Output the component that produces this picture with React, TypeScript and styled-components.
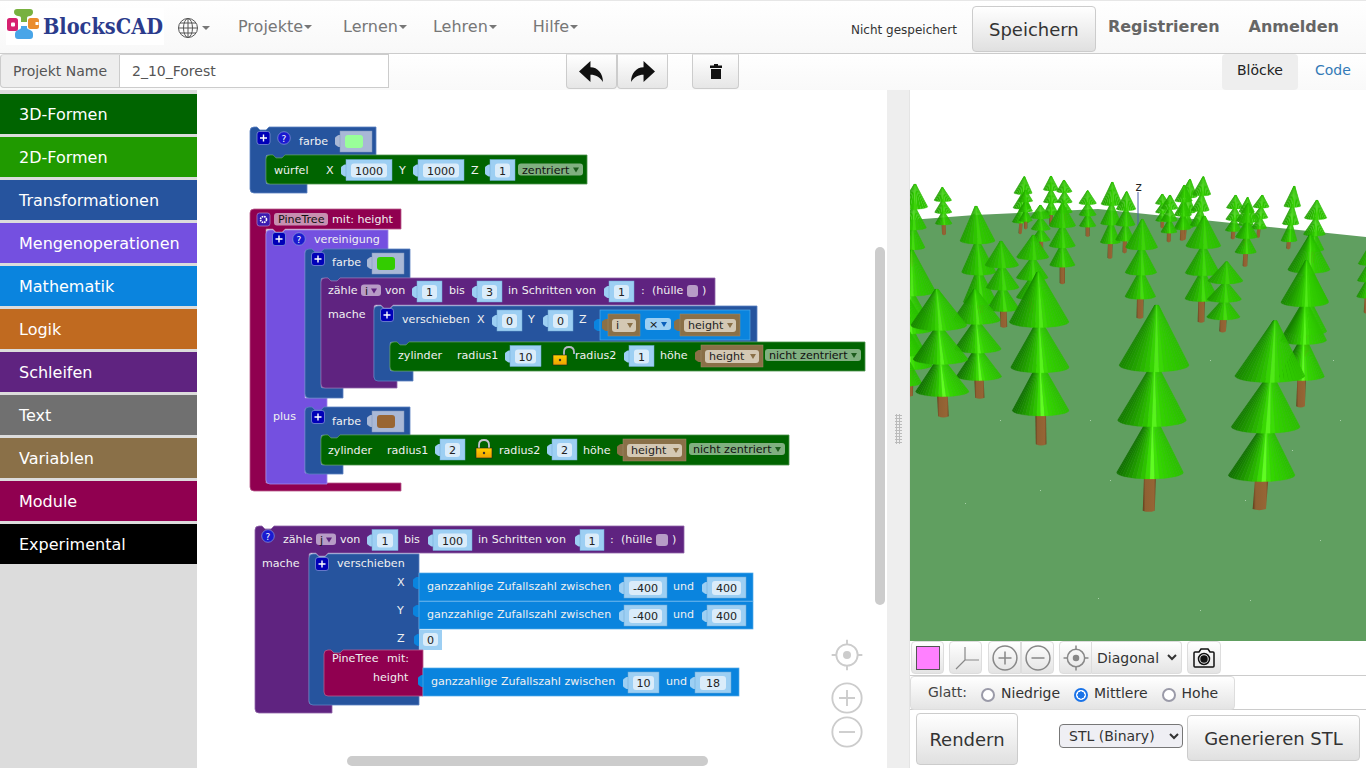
import React from "react";
import styled, { createGlobalStyle } from "styled-components";

const Global = createGlobalStyle`
  html, body { margin: 0; padding: 0; overflow: hidden; background: #fff; font-family: "DejaVu Sans", sans-serif; }
  #root { width: 1366px; height: 768px; }
`;
const Page = styled.div`width:1366px;height:768px;display:flex;flex-direction:column;overflow:hidden;`;
const Nav = styled.header`flex:none;display:flex;align-items:flex-start;background:linear-gradient(#fff,#f8f8f8);border-top:1px solid #e7e7e7;border-bottom:1px solid #ccc;height:52px;`;
const LogoBox = styled.div`width:158px;height:37px;margin:7px 0 0 6px;background:#fff;flex:none;`;
const GlobeWrap = styled.div`margin:16px 0 0 13px;width:46px;height:22px;display:flex;align-items:center;gap:3px;flex:none;`;
const Caret = styled.span`display:inline-block;width:0;height:0;border-left:4px solid transparent;border-right:4px solid transparent;border-top:4px solid ${p=>p.$c||"#777"};`;
const Menu = styled.nav`display:flex;margin-left:15px;`;
const MenuItem = styled.a`font-size:16px;color:#777;display:flex;align-items:center;gap:1px;height:51px;padding-right:${p=>p.$pr}px;`;
const NavRight = styled.div`margin-left:auto;display:flex;align-items:flex-start;`;
const Status = styled.span`font-size:12px;color:#333;margin:22px 15px 0 0;white-space:nowrap;`;
const SaveBtn = styled.button`width:124px;height:46px;margin-top:5px;font:18px "DejaVu Sans",sans-serif;color:#333;background:linear-gradient(#fff,#e0e0e0);border:1px solid #ccc;border-radius:4px;`;
const NavLink = styled.a`font-size:16px;font-weight:bold;color:#666;margin-top:16px;margin-left:${p=>p.$ml}px;margin-right:${p=>p.$mr||0}px;white-space:nowrap;`;

const Tools = styled.div`height:36px;flex:none;display:flex;background:linear-gradient(#fff,#f9f9f9);`;
const NameGroup = styled.div`width:389px;height:34px;display:flex;flex:none;`;
const NameAddon = styled.div`width:120px;box-sizing:border-box;background:#eee;border:1px solid #ccc;border-radius:4px 0 0 4px;border-top-color:#ddd;font-size:14px;color:#555;padding-left:12px;line-height:32px;`;
const NameInput = styled.div`flex:1;box-sizing:border-box;background:#fff;border:1px solid #ccc;border-left:none;font-size:14px;color:#555;padding-left:12px;line-height:32px;`;
const Actions = styled.div`margin-left:177px;display:flex;`;
const ActBtn = styled.button`width:${p=>p.$w||51}px;height:35px;margin-left:${p=>p.$ml||0}px;padding:0;display:flex;align-items:center;justify-content:center;background:linear-gradient(#fff,#e6e6e6);border:1px solid #ccc;border-top-color:#e8e8e8;border-radius:0 0 4px 4px;`;
const Tabs = styled.div`margin-left:auto;display:flex;`;
const TabOn = styled.div`width:76px;height:36px;background:#eee;border-radius:4px;font-size:14px;color:#222;text-align:center;line-height:33px;`;
const TabOff = styled.div`width:68px;height:36px;font-size:14px;color:#337ab7;padding-left:17px;box-sizing:border-box;line-height:33px;`;

const Main = styled.main`flex:1;min-height:0;display:flex;`;
const Sidebar = styled.aside`width:197px;flex:none;background:#dcdcdc;padding-top:4px;box-sizing:border-box;display:flex;flex-direction:column;gap:3px;`;
const Cat = styled.div`height:40px;flex:none;padding-left:19px;line-height:41px;font-size:16px;color:#fff;background:${p=>p.$bg};`;
const Workspace = styled.section`width:690px;flex:none;position:relative;background:#fff;overflow:hidden;`;
const Canvas = styled.svg`display:block;`;
const ScrollV = styled.div`position:absolute;left:678px;top:157px;width:10px;height:358px;background:#ccc;border-radius:5px;`;
const ScrollH = styled.div`position:absolute;left:150px;top:666px;width:361px;height:10px;background:#ccc;border-radius:5px;`;
const WsControls = styled.div`position:absolute;left:633px;top:549px;width:34px;display:flex;flex-direction:column;align-items:center;`;
const CtlSpacer = styled.div`height:${p=>p.$h}px;flex:none;`;
const Gutter = styled.div`width:23px;flex:none;background:#eee;display:flex;align-items:center;justify-content:center;`;
const Grip = styled.div`width:7px;height:30px;margin-top:-1px;background-image:radial-gradient(#bbb 1px,transparent 1.2px);background-size:3px 3px;`;
const Right = styled.section`flex:1;display:flex;flex-direction:column;min-width:0;border-left:1px solid #e4e4e4;box-sizing:border-box;margin-left:-1px;`;
const RowOne = styled.div`height:34px;flex:none;display:flex;gap:5px;padding-left:1px;border-bottom:1px solid #ccc;`;
const Group = styled.div`display:flex;margin-left:${p=>p.$ml||0}px;`;
const ViewBtn = styled.button`width:${p=>p.$w||33}px;height:33px;padding:0;display:flex;align-items:center;justify-content:center;background:linear-gradient(#fff,#e4e4e4);border:1px solid #ddd;border-radius:${p=>p.$r||"4px"};`;
const Swatch = styled.span`display:block;width:24px;height:24px;box-sizing:border-box;background:#ff80ff;border:1px solid #555;`;
const SelectShell = styled.div`width:90px;height:33px;box-sizing:border-box;background:linear-gradient(#fff,#e4e4e4);border:1px solid #ddd;border-left:none;border-radius:0 4px 4px 0;`;
const ViewSelect = styled.select`width:88px;height:31px;font:14px "DejaVu Sans",sans-serif;color:#333;background:transparent;border:none;padding:0 0 0 1px;outline:none;`;
const RowTwo = styled.div`height:33px;flex:none;border-bottom:1px solid #ccc;`;
const Glatt = styled.div`width:325px;height:34px;box-sizing:border-box;background:linear-gradient(#fff,#e4e4e4);border:1px solid #ddd;border-radius:4px;display:flex;align-items:center;font-size:14px;color:#444;padding-left:17px;`;
const GlattLabel = styled.span`margin-right:14px;margin-top:-3px;`;
const RadioLabel = styled.label`display:flex;align-items:center;margin-right:${p=>p.$mr}px;color:#333;`;
const Radio = styled.input`appearance:none;box-sizing:border-box;margin:3px 6px 0 0;width:14px;height:14px;border-radius:50%;border:2px solid #9a9aa8;background:#fff;
  &:checked{border-color:#1a73e8;background:radial-gradient(#1a73e8 3.4px,#fff 3.8px);}`;
const RowThree = styled.div`flex:1;display:flex;align-items:center;padding-left:6px;`;
const RenderBtn = styled.button`width:102px;height:52px;font:18px "DejaVu Sans",sans-serif;color:#333;background:linear-gradient(#fff,#e0e0e0);border:1px solid #ccc;border-radius:4px;`;
const FormatSelect = styled.select`width:124px;height:24px;margin:-6px 0 0 41px;font:14px "DejaVu Sans",sans-serif;color:#333;background:#efeff4;border:1px solid #777;border-radius:4px;padding-left:5px;`;
const GenBtn = styled.button`width:173px;height:46px;margin:-2px 0 0 4px;font:18px "DejaVu Sans",sans-serif;color:#333;background:linear-gradient(#fff,#e0e0e0);border:1px solid #ccc;border-radius:4px;`;

const BL = styled.text`font:11.1px "DejaVu Sans",sans-serif;fill:${p=>p.$c||"#f0f0f0"};`;
const FT = styled.text`font:11.1px "DejaVu Sans",sans-serif;fill:#222;text-anchor:${p=>p.$a||"middle"};`;

const C = { blue:"#26549e", green:"#006400", purple:"#5f2380", violet:"#7450e0", mod:"#900050", math:"#0a84de", brown:"#8a7048" };
const EDGE:Record<string,string> = { "#26549e":"#5c82c0","#006400":"#4c924c","#5f2380":"#8f66a8","#7450e0":"#9e88ea","#900050":"#b75a8c" };

/* Row on top, column on the left, a mouth for the nested blocks, foot below */
function pathC(x:number,y:number,x2:number,y1:number,xi:number,y2:number,xb:number,y3:number){
  return `M${x+4} ${y} H${x+7} l3 3 h6 l3 -3 H${x2} V${y1} H${xi+19} l-3 3 h-6 l-3 -3 H${xi+2} q-2 0 -2 2 V${y2-2} q0 2 2 2 H${xb} V${y3} H${x+4} q-4 0 -4 -4 V${y+4} q0 -4 4 -4 Z`;
}
function pathR(x:number,y:number,x2:number,y2:number){
  return `M${x+4} ${y} H${x+7} l3 3 h6 l3 -3 H${x2} V${y2} H${x+4} q-4 0 -4 -4 V${y+4} q0 -4 4 -4 Z`;
}
const Shape=({d,c}:{d:string;c:string})=><path d={d} fill={c} stroke={EDGE[c]} strokeWidth={0.8}/>;
const Tab=({x,y,c}:{x:number;y:number;c:string})=><path d={`M${x+6} ${y-6} h-2 q-1 0 -2 1 q-2 1 -2 2 v6 q0 1 2 2 q1 1 2 1 h2 Z`} fill={c}/>;
const Num=({x,y,w,t}:{x:number;y:number;w:number;t:string})=>(
  <g>
    <Tab x={x-5} y={y+11} c="#9dcff3"/>
    <rect x={x} y={y} width={w} height={21} fill="#9dcff3" stroke="#6fa8d4" strokeWidth={0.5}/>
    <rect x={x+5} y={y+4} width={w-10} height={14} rx={3} fill="#daecfa"/>
    <FT x={x+w/2} y={y+15}>{t}</FT>
  </g>
);
const Dd=({x,y,w,t,c="#80b080"}:{x:number;y:number;w:number;t:string;c?:string})=>(
  <g>
    <rect x={x} y={y} width={w} height={12} rx={3} fill={c}/>
    <BL x={x+4} y={y+10} $c="#111">{t}</BL>
    <path d={`M${x+w-10} ${y+4} h6 l-3 5 Z`} fill={"#1d5c1d"}/>
  </g>
);
const Var=({x,y,w,t}:{x:number;y:number;w:number;t:string})=>(
  <g>
    <Tab x={x-6} y={y+11} c={C.brown}/>
    <rect x={x} y={y} width={w} height={22} fill={C.brown} stroke="#a08a68" strokeWidth={0.5}/>
    <rect x={x+4} y={y+5} width={w-8} height={13} rx={3} fill="#d4c8b4"/>
    <BL x={x+8} y={y+15} $c="#222">{t}</BL>
    <path d={`M${x+w-13} ${y+9} h6 l-3 5 Z`} fill={C.brown}/>
  </g>
);
const Plus=({x,y}:{x:number;y:number})=>(
  <g>
    <rect x={x-6.5} y={y-6.5} width={13} height={13} rx={2.5} fill="#0000b8" stroke="#8b9ad8" strokeWidth={0.7}/>
    <path d={`M${x-3.5} ${y} h7 M${x} ${y-3.5} v7`} stroke="#fff" strokeWidth={1.4}/>
  </g>
);
const Q=({x,y}:{x:number;y:number})=>(
  <g>
    <circle cx={x} cy={y} r={6.3} fill="#1a1ad0" stroke="#8b9ad8" strokeWidth={0.7}/>
    <BL x={x} y={y+3.5} textAnchor="middle" style={{fontSize:9}} $c="#fff">?</BL>
  </g>
);
const ColorF=({x,y,c}:{x:number;y:number;c:string})=>(
  <g>
    <Tab x={x-5} y={y+10} c="#a9b8d6"/>
    <rect x={x} y={y} width={32} height={21} fill="#a9b8d6" stroke="#7f94bd" strokeWidth={0.5}/>
    <rect x={x+5} y={y+4} width={18} height={13} rx={3} fill={c}/>
  </g>
);
const IdxDd=({x,y,t}:{x:number;y:number;t:string})=>(
  <g>
    <rect x={x} y={y} width={20} height={11.5} rx={3} fill="#b79cc6"/>
    <BL x={x+4} y={y+10} $c="#111">{t}</BL>
    <path d={`M${x+10} ${y+4} h6 l-3 5 Z`} fill={C.purple}/>
  </g>
);
const Lock=({x,y,open}:{x:number;y:number;open?:boolean})=>(
  <g>
    {open
      ? <path d={`M${x+11} ${y+7} v-3 q0 -5 5 -5 q5 0 5 5 v2`} fill="none" stroke="#b8b8c8" strokeWidth={1.8}/>
      : <path d={`M${x+3} ${y+7} v-3 q0 -5 5 -5 q5 0 5 5 v3`} fill="none" stroke="#c4c4d0" strokeWidth={1.8}/>}
    <rect x={x} y={y+7} width={open?14:16} height={10} fill="url(#gold)" stroke="#222" strokeWidth={0.6}/>
    <circle cx={x+(open?7:8)} cy={y+12} r={1.2} fill="#333"/>
  </g>
);

const Blocks=()=> (
  <Canvas width={690} height={678} viewBox="197 90 690 678">
    <defs>
      <linearGradient id="gold" x1="0" y1="0" x2="0" y2="1"><stop offset="0" stopColor="#ffd200"/><stop offset="1" stopColor="#f0a000"/></linearGradient>
    </defs>
    {/* farbe / würfel */}
    <Shape d={pathC(250,127,376,155,266,184,307,193)} c={C.blue}/>
    <Plus x={263.5} y={138}/><Q x={284} y={138}/>
    <BL x={299} y={145}>farbe</BL>
    <ColorF x={340} y={131} c="#99ff99"/>
    <Shape d={pathR(266,155,587,184)} c={C.green}/>
    <BL x={274} y={174}>würfel</BL><BL x={326} y={174}>X</BL>
    <Num x={346} y={159.5} w={46} t="1000"/>
    <BL x={399} y={174}>Y</BL><Num x={418} y={159.5} w={46} t="1000"/>
    <BL x={471} y={174}>Z</BL><Num x={490} y={159.5} w={25} t="1"/>
    <Dd x={518} y={163.5} w={65} t="zentriert"/>

    {/* PineTree definition */}
    <Shape d={`M254 209 H401 V229 H285 l-3 3 h-6 l-3 -3 H266 V483 H401 V491 H254 q-4 0 -4 -4 V213 q0 -4 4 -4 Z`} c={C.mod}/>
    <rect x={257} y={213} width={13} height={13} rx={2.5} fill="#3a1ab0" stroke="#b08ac8" strokeWidth={0.7}/>
    <circle cx={263.5} cy={219.5} r={3} fill="none" stroke="#fff" strokeWidth={1.6} strokeDasharray="1.6 0.8"/>
    <rect x={274} y={213} width={54} height={12.5} rx={3} fill="#c78fb0"/>
    <BL x={278} y={223} $c="#111">PineTree</BL>
    <BL x={332} y={223}>mit: height</BL>

    <Shape d={`M270 230 H273 l3 3 h6 l3 -3 H388 V250 H324 l-3 3 h-6 l-3 -3 H307 q-2 0 -2 2 V398 H327 V408 H324 l-3 3 h-6 l-3 -3 H307 q-2 0 -2 2 V473 H327 V484 H270 q-4 0 -4 -4 V234 q0 -4 4 -4 Z`} c={C.violet}/>
    <Plus x={279} y={239}/><Q x={299} y={239}/>
    <BL x={314} y={243}>vereinigung</BL>
    <BL x={273} y={420}>plus</BL>

    <Shape d={pathC(305,249,410,278,321,388,343,398)} c={C.blue}/>
    <Plus x={318} y={259}/>
    <BL x={332} y={266}>farbe</BL>
    <ColorF x={372} y={253} c="#33cc00"/>

    <Shape d={pathC(321,278,715,305,374,379,397,388)} c={C.purple}/>
    <BL x={328} y={294}>zähle</BL><IdxDd x={361} y={284.5} t="i"/>
    <BL x={385} y={294}>von</BL><Num x={417} y={281} w={25} t="1"/>
    <BL x={449} y={294}>bis</BL><Num x={477} y={281} w={25} t="3"/>
    <BL x={508} y={294}>in Schritten von</BL><Num x={609} y={281} w={25} t="1"/>
    <BL x={641} y={294}>:</BL><BL x={652} y={294}>(hülle</BL>
    <rect x={687} y={285} width={11} height={12} rx={3} fill="#b79cc6"/>
    <BL x={702} y={294}>)</BL>
    <BL x={328} y={318}>mache</BL>

    <Shape d={pathC(374,306,757,342,390,371,413,381)} c={C.blue}/>
    <Plus x={387} y={315}/>
    <BL x={402} y={323}>verschieben</BL>
    <BL x={477} y={323}>X</BL><Num x={497} y={310} w={25} t="0"/>
    <BL x={528} y={323}>Y</BL><Num x={548} y={310} w={25} t="0"/>
    <BL x={579} y={323}>Z</BL>
    <Tab x={594} y={325} c={C.math}/>
    <rect x={600} y={310} width={150} height={30} fill={C.math} stroke="#53a9e8" strokeWidth={0.7}/>
    <Var x={608} y={314} w={32} t="i"/>
    <rect x={645} y={318} width={26} height={12} rx={3} fill="#9dcff3"/>
    <BL x={649} y={328} $c="#111">×</BL><path d="M661 322 h6 l-3 5 Z" fill="#0a5fbb"/>
    <Var x={680} y={314} w={60} t="height"/>

    <Shape d={pathR(390,342,865,371)} c={C.green}/>
    <BL x={398} y={359}>zylinder</BL><BL x={457} y={359}>radius1</BL>
    <Num x={510} y={345.5} w={31} t="10"/>
    <Lock x={553} y={348} open/>
    <BL x={575} y={359}>radius2</BL><Num x={629} y={345.5} w={25} t="1"/>
    <BL x={660} y={359}>höhe</BL><Var x={701} y={345} w={62} t="height"/>
    <Dd x={765} y={349} w={96} t="nicht zentriert"/>

    <Shape d={pathC(305,407,410,435,321,465,343,474)} c={C.blue}/>
    <Plus x={318} y={417}/>
    <BL x={332} y={425}>farbe</BL>
    <ColorF x={372} y={411} c="#996633"/>
    <Shape d={pathR(321,435,789,465)} c={C.green}/>
    <BL x={328} y={454}>zylinder</BL><BL x={387} y={454}>radius1</BL>
    <Num x={440} y={439} w={25} t="2"/>
    <Lock x={476} y={441}/>
    <BL x={499} y={454}>radius2</BL><Num x={552} y={439} w={25} t="2"/>
    <BL x={583} y={454}>höhe</BL><Var x={623} y={439} w={63} t="height"/>
    <Dd x={689} y={443} w={96} t="nicht zentriert"/>

    {/* zähle j */}
    <Shape d={pathC(255,526,684,553,309,704,332,713)} c={C.purple}/>
    <Q x={268} y={536}/>
    <BL x={283} y={543}>zähle</BL><IdxDd x={316} y={533.5} t="j"/>
    <BL x={340} y={543}>von</BL><Num x={372} y={529.5} w={26} t="1"/>
    <BL x={404} y={543}>bis</BL><Num x={433} y={529.5} w={39} t="100"/>
    <BL x={478} y={543}>in Schritten von</BL><Num x={580} y={529.5} w={24} t="1"/>
    <BL x={610} y={543}>:</BL><BL x={621} y={543}>(hülle</BL>
    <rect x={656} y={534} width={12} height={12} rx={3} fill="#b79cc6"/>
    <BL x={672} y={543}>)</BL>
    <BL x={262} y={567}>mache</BL>

    <Shape d={pathR(309,554,419,705)} c={C.blue}/>
    <Plus x={322} y={564}/>
    <BL x={337} y={567}>verschieben</BL>
    <BL x={397} y={586}>X</BL><Tab x={413} y={583} c={C.math}/>
    <rect x={419} y={573} width={334} height={28} fill={C.math} stroke="#53a9e8" strokeWidth={0.7}/>
    <BL x={427} y={590}>ganzzahlige Zufallszahl zwischen</BL>
    <Num x={624} y={577} w={43} t="-400"/>
    <BL x={673} y={590}>und</BL><Num x={707} y={577} w={39} t="400"/>
    <BL x={397} y={614}>Y</BL><Tab x={413} y={611} c={C.math}/>
    <rect x={419} y={601.5} width={334} height={27.5} fill={C.math} stroke="#53a9e8" strokeWidth={0.7}/>
    <BL x={427} y={618}>ganzzahlige Zufallszahl zwischen</BL>
    <Num x={624} y={605} w={43} t="-400"/>
    <BL x={673} y={618}>und</BL><Num x={707} y={605} w={39} t="400"/>
    <BL x={397} y={642}>Z</BL><Tab x={414} y={640} c={C.math}/>
    <rect x={419} y={630} width={23} height={20} fill="#9dcff3"/>
    <rect x={423} y={633} width={15} height={13} rx={3} fill="#daecfa"/>
    <FT x={430.5} y={643.5}>0</FT>

    <Shape d={pathR(324,650,423,696)} c={C.mod}/>
    <BL x={332} y={662}>PineTree</BL><BL x={387} y={662}>mit:</BL>
    <BL x={373} y={681}>height</BL>
    <Tab x={418} y={681} c={C.math}/>
    <rect x={423} y={668} width={316} height={28} fill={C.math} stroke="#53a9e8" strokeWidth={0.7}/>
    <BL x={431} y={685}>ganzzahlige Zufallszahl zwischen</BL>
    <Num x={628} y={672} w={31} t="10"/>
    <BL x={666} y={685}>und</BL><Num x={695} y={672} w={36} t="18"/>
  </Canvas>
);

/* [apexX, apexY, baseX, baseY, halfWidth, trunkBottomY, trunkHalf] in 3x coordinates */
type T=[number,number,number,number,number,number,number];
const TREES:T[]=[
  [30,42,20,240,40,290,7],[112,52,116,165,25,195,6],[358,20,348,160,26,192,5],[362,60,362,155,20,178,5],
  [438,18,438,135,22,165,5],[477,30,480,130,22,160,5],[406,105,408,215,28,240,6],[548,62,548,172,25,200,6],
  [622,36,616,222,30,266,7],[665,65,660,214,28,250,6],[772,72,772,155,20,175,5],[855,28,840,175,26,210,6],
  [838,45,832,180,25,212,6],[895,20,882,170,26,180,5],[795,75,792,190,24,217,6],[992,75,985,185,24,208,6],
  [1072,75,1062,178,23,203,5],[1028,82,1020,205,22,230,5],[1168,48,1152,216,24,238,6],[1236,90,1225,245,32,280,6],
  [1395,225,1385,385,30,430,6],
  [213,108,225,405,50,430,10],[288,213,295,425,48,473,10],[385,195,380,390,46,430,9],[472,100,472,292,38,342,8],
  [712,148,706,388,46,446,10],[898,138,890,395,50,458,10],[1030,100,1022,252,32,290,7],[965,275,955,450,50,487,10],
  [1216,195,1205,495,60,560,8],[1205,272,1190,632,68,712,13],
  [20,240,10,600,72,680,16],[-10,350,-10,650,60,700,12],
  [210,358,222,632,68,686,14],[95,358,112,680,80,742,16],[400,307,407,738,85,826,16],
  [755,405,735,927,100,1025,18],[1110,452,1070,935,100,1020,20],
];
const mix=(a:number[],b:number[],f:number)=>a.map((v,i)=>Math.round(v+(b[i]-v)*f));
const RAMP:[number,number[]][]=[[0,[16,110,0]],[0.2,[30,150,0]],[0.38,[44,190,0]],[0.46,[52,215,0]],[0.5,[104,255,40]],[0.56,[90,250,30]],[0.62,[54,218,0]],[0.8,[48,205,0]],[1,[44,192,0]]];
function leaf(t:number,glow:number){
  let i=0; while(i<RAMP.length-2&&t>RAMP[i+1][0]) i++;
  const [t0,c0]=RAMP[i],[t1,c1]=RAMP[i+1];
  const c=mix(c0,c1,(t-t0)/(t1-t0));
  const base=mix([44,190,0],c,glow);
  return `rgb(${base[0]},${base[1]},${base[2]})`;
}
const Cone=({ax,ay,cx,cy,w,glow,n}:{ax:number;ay:number;cx:number;cy:number;w:number;glow:number;n:number})=>{
  const ry=w*0.2, top=w*0.05, parts=[];
  for(let i=0;i<n;i++){
    const p0=Math.PI*i/n,p1=Math.PI*(i+1)/n;
    const d=`M${ax-top*Math.cos(p0)} ${ay} L${cx-w*Math.cos(p0)} ${cy+ry*Math.sin(p0)} L${cx-w*Math.cos(p1)} ${cy+ry*Math.sin(p1)} L${ax-top*Math.cos(p1)} ${ay} Z`;
    const col=leaf(0.5-0.5*Math.cos((p0+p1)/2),glow);
    parts.push(<path key={i} d={d} fill={col} stroke={col} strokeWidth={0.7}/>);
  }
  return <g>{parts}</g>;
};
const Tree=({t}:{t:T})=>{
  const [ax,ay,bx,by,hw,ty,th]=t;
  const at=(f:number)=>[ax+(bx-ax)*f, ay+(by-ay)*f];
  const tx=bx+(bx-ax)*(ty-by)/(by-ay);
  const big=hw>55;
  const cones:[number,number,number,number][]=[[0.625,1,1,1],[0.33,0.7,1.03,.85],[0,0.385,1.05,.7]];
  return (
    <g>
      <path d={`M${bx-th} ${by-8} L${tx-th} ${ty-3} Q${tx} ${ty+4} ${tx+th} ${ty-3} L${bx+th} ${by-8} Z`} fill="url(#bark)"/>
      {cones.map(([f0,f1,k,g],i)=>{
        const [x0,y0]=at(f0),[x1,y1]=at(f1),w=hw*k;
        return <Cone key={i} ax={x0} ay={y0} cx={x1} cy={y1-w*0.2} w={w} glow={big?g:g*0.55} n={big?22:12}/>;
      })}
    </g>
  );
};
const SPECKS=[[1013,410],[1090,420],[1210,360],[1292,450],[1245,500],[1333,360],[1098,598],[1200,610],[965,503],[1040,490],[1110,480],[1340,420],[1320,540],[1250,600],[1000,420],[1304,260]];
const Viewer=()=>(
  <Canvas width={456} height={551} viewBox="910 90 456 551">
    <defs>
      <linearGradient id="bark" x1="0" x2="1" y1="0" y2="0">
        <stop offset="0" stopColor="#5f3e1c"/><stop offset=".2" stopColor="#8f6032"/><stop offset=".85" stopColor="#966535"/><stop offset="1" stopColor="#6a4620"/>
      </linearGradient>
    </defs>
    <rect x={910} y={90} width={456} height={551} fill="#fff"/>
    <path d="M910 220 L975 215 L1098 209 L1366 237 V641 H910 Z" fill="#609f60"/>
    <path d="M1138 192 V280" stroke="#4a5fa8" strokeWidth={1}/>
    <BL x={1135.5} y={191} $c="#222" style={{fontSize:12}}>z</BL>
    {SPECKS.map(([x,y],i)=><rect key={i} x={x} y={y} width={1} height={1} fill="#a9d0a9"/>)}
    <g transform="translate(905 170) scale(0.33333)">
      {TREES.map((t,i)=><Tree key={i} t={t}/>)}
    </g>
  </Canvas>
);

const CircleIcon=({s="#888",size=24,kind}:{s?:string;size?:number;kind:"plus"|"minus"|"target"})=>(
  <svg width={size} height={size} viewBox="0 0 24 24" fill="none" stroke={s} strokeWidth={1.4}>
    {kind==="target"?<>
      <circle cx={12} cy={12} r={8}/><circle cx={12} cy={12} r={3} fill={s} stroke="none"/>
      <path d="M12 0.5v3.5M12 20v3.5M0.5 12h3.5M20 12h3.5"/></>:<>
      <circle cx={12} cy={12} r={11}/>
      <path d={kind==="plus"?"M6 12h12M12 6v12":"M6 12h12"}/></>}
  </svg>
);
const ArrowIcon=({flip}:{flip?:boolean})=>(
  <svg width={25} height={21} viewBox="0 0 24 20" style={flip?{transform:"scaleX(-1)"}:undefined}>
    <path d="M0 10 L11 0 V6 C18 6 23 12 23 20 C20 15 16 13 11 13 V20 Z" fill="#111"/>
  </svg>
);

const MENU=[["Projekte",31],["Lernen",26],["Lehren",36],["Hilfe",0]] as [string,number][];
const CATS=[["3D-Formen","#006400"],["2D-Formen","#209a00"],["Transformationen","#26549e"],["Mengenoperationen","#7450e0"],["Mathematik","#0a84de"],["Logik","#c06a20"],["Schleifen","#5f2380"],["Text","#707070"],["Variablen","#8a7048"],["Module","#900050"],["Experimental","#000"]];

export default function App(){
  return (
    <Page>
      <Global/>
      <Nav>
        <LogoBox>
          <svg width={158} height={37} viewBox="6 7 158 37">
            <path d="M17 8 h13 q3 0 3 3 q0 3 -3 4 q-3 0 -3 2 v4 h-6 v-4 q0 -2 -3 -2 q-4 -1 -4 -4 q0 -3 3 -3Z" fill="#78b13f"/>
            <path d="M21 25 h6 v2 q0 1 3 2 q3 1 3 4 v2 q0 3 -3 3 h-12 q-3 0 -3 -3 v-2 q0 -3 3 -4 q3 -1 3 -2Z" fill="#48a5e8"/>
            <rect x={7} y={17} width={11} height={13} rx={2.5} fill="#d6206f"/><rect x={11} y={21.5} width={4} height={4} rx={1} fill="#fff"/>
            <rect x={28} y={17} width={11} height={11} rx={2.5} fill="#ea8c2d"/><rect x={35.5} y={21} width={3} height={3} fill="#fff"/>
            <text transform="translate(43 33) scale(0.88 1)" fontFamily="'DejaVu Serif',serif" fontWeight={700} fontSize={22} fill="#2b3b8c">BlocksCAD</text>
          </svg>
        </LogoBox>
        <GlobeWrap>
          <svg width={22} height={22} viewBox="0 0 22 22" fill="none" stroke="#555" strokeWidth={1}>
            <circle cx={11} cy={11} r={9.5}/><ellipse cx={11} cy={11} rx={4.5} ry={9.5}/><path d="M11 1.5v19M1.5 11h19M3 6h16M3 16h16"/>
          </svg>
          <Caret/>
        </GlobeWrap>
        <Menu>
          {MENU.map(([m,p])=><MenuItem key={m} $pr={p}>{m}<Caret/></MenuItem>)}
        </Menu>
        <NavRight>
          <Status>Nicht gespeichert</Status>
          <SaveBtn>Speichern</SaveBtn>
          <NavLink $ml={12}>Registrieren</NavLink>
          <NavLink $ml={29} $mr={27}>Anmelden</NavLink>
        </NavRight>
      </Nav>
      <Tools>
        <NameGroup>
          <NameAddon>Projekt Name</NameAddon>
          <NameInput>2_10_Forest</NameInput>
        </NameGroup>
        <Actions>
          <ActBtn><ArrowIcon/></ActBtn>
          <ActBtn><ArrowIcon flip/></ActBtn>
          <ActBtn $w={47} $ml={24}>
            <svg width={12} height={15} viewBox="0 0 12 15"><path d="M4 0h4v1.5h4V4H0V1.5h4Z M1 5h10v10H1Z" fill="#111"/></svg>
          </ActBtn>
        </Actions>
        <Tabs>
          <TabOn>Blöcke</TabOn>
          <TabOff>Code</TabOff>
        </Tabs>
      </Tools>
      <Main>
        <Sidebar>{CATS.map(([n,c])=><Cat key={n} $bg={c}>{n}</Cat>)}</Sidebar>
        <Workspace>
          <Blocks/>
          <ScrollV/><ScrollH/>
          <WsControls>
            <CircleIcon s="#ccc" size={32} kind="target"/>
            <CtlSpacer $h={11}/>
            <CircleIcon s="#ccc" size={32} kind="plus"/>
            <CtlSpacer $h={2}/>
            <CircleIcon s="#ccc" size={32} kind="minus"/>
          </WsControls>
        </Workspace>
        <Gutter><Grip/></Gutter>
        <Right>
          <Viewer/>
          <RowOne>
            <ViewBtn><Swatch/></ViewBtn>
            <ViewBtn>
              <svg width={26} height={26} viewBox="0 0 26 26" fill="none" stroke="#888" strokeWidth={1.2}><path d="M12 2V15H26M12 15L3 24"/></svg>
            </ViewBtn>
            <Group $ml={1}>
              <ViewBtn $r="4px 0 0 4px"><CircleIcon size={26} kind="plus"/></ViewBtn>
              <ViewBtn $r="0 4px 4px 0"><CircleIcon size={26} kind="minus"/></ViewBtn>
            </Group>
            <Group>
              <ViewBtn $r="4px 0 0 4px"><CircleIcon size={26} kind="target"/></ViewBtn>
              <SelectShell><ViewSelect defaultValue="d"><option value="d">Diagonal</option></ViewSelect></SelectShell>
            </Group>
            <ViewBtn $w={34}>
              <svg width={24} height={24} viewBox="0 0 24 24" fill="none" stroke="#111" strokeWidth={1.5}>
                <path d="M3 6h4l2-3h7l2 3h3q1 0 1 1v13q0 1-1 1H3q-1 0-1-1V7q0-1 1-1Z"/><circle cx={12} cy={13} r={5.5}/><circle cx={12} cy={13} r={3} fill="#111"/>
              </svg>
            </ViewBtn>
          </RowOne>
          <RowTwo>
            <Glatt>
              <GlattLabel>Glatt:</GlattLabel>
              <RadioLabel $mr={14}><Radio type="radio" name="s"/>Niedrige</RadioLabel>
              <RadioLabel $mr={14}><Radio type="radio" name="s" defaultChecked/>Mittlere</RadioLabel>
              <RadioLabel $mr={0}><Radio type="radio" name="s"/>Hohe</RadioLabel>
            </Glatt>
          </RowTwo>
          <RowThree>
            <RenderBtn>Rendern</RenderBtn>
            <FormatSelect defaultValue="s"><option value="s">STL (Binary)</option></FormatSelect>
            <GenBtn>Generieren STL</GenBtn>
          </RowThree>
        </Right>
      </Main>
    </Page>
  );
}
